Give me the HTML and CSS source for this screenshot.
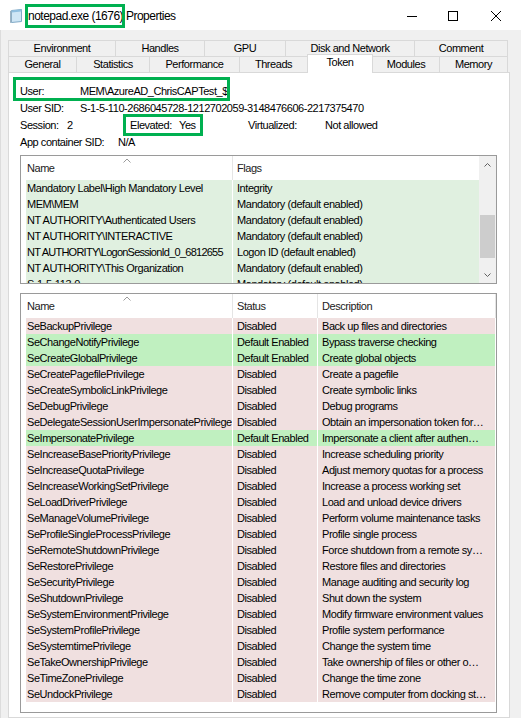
FILE: index.html
```html
<!DOCTYPE html>
<html lang="en">
<head>
    <meta charset="UTF-8">
    <title>notepad.exe (1676) Properties</title>
    <link rel="stylesheet" href="styles.css">
</head>
<body>
<div class="window">
    <div class="titlebar">
        <svg class="app-icon" viewBox="0 0 16 16">
            <path d="M3.5 2.5 L13.5 1.5 L13.5 13.5 L3.5 14.5 Z" fill="#cfe6f5" stroke="#7fa9c6"/>
            <path d="M3.5 2.5 L13.5 1.5 L13.5 3.5 L3.5 4.5 Z" fill="#8fbfe0"/>
            <path d="M2 3 L3.5 2.5 L3.5 14.5 L2 15 Z" fill="#9cb3c4"/>
        </svg>
        <span class="title">notepad.exe (1676) Properties</span>
        <div class="controls">
            <svg class="min" viewBox="0 0 10 10"><path d="M0 5.5 H10" stroke="#000"/></svg>
            <svg class="max" viewBox="0 0 10 10"><rect x="0.5" y="0.5" width="9" height="9" fill="none" stroke="#000"/></svg>
            <svg class="close" viewBox="0 0 10 10"><path d="M0 0 L10 10 M10 0 L0 10" stroke="#000"/></svg>
        </div>
    </div>

    <div class="frame">
        <div class="tab-row back">
            <div class="tab">Environment</div>
            <div class="tab">Handles</div>
            <div class="tab">GPU</div>
            <div class="tab">Disk and Network</div>
            <div class="tab">Comment</div>
        </div>
        <div class="tab-row front">
            <div class="tab">General</div>
            <div class="tab">Statistics</div>
            <div class="tab">Performance</div>
            <div class="tab">Threads</div>
            <div class="tab active">Token</div>
            <div class="tab">Modules</div>
            <div class="tab">Memory</div>
        </div>

        <div class="tab-page">
            <div class="info-line">
                <span class="lbl lbl-user">User:</span>
                <span>MEM\AzureAD_ChrisCAPTest_$</span>
            </div>
            <div class="info-line">
                <span class="lbl lbl-user">User SID:</span>
                <span>S-1-5-110-2686045728-1212702059-3148476606-2217375470</span>
            </div>
            <div class="info-line">
                <span class="part part-session"><span class="lbl lbl-session">Session:</span>2</span>
                <span class="part part-elevated"><span class="lbl lbl-elevated">Elevated:</span>Yes</span>
                <span class="part"><span class="lbl lbl-virtual">Virtualized:</span>Not allowed</span>
            </div>
            <div class="info-line">
                <span class="lbl lbl-container">App container SID:</span>
                <span>N/A</span>
            </div>

            <!-- groups -->
            <div class="list groups">
                <div class="list-body">
                    <div class="list-head">
                        <div class="col-head h-name">
                            <svg class="sort-arrow" viewBox="0 0 8 5"><path d="M0.5 4.5 L4 1 L7.5 4.5" fill="none" stroke="#9a9a9a"/></svg>
                            Name
                        </div>
                        <div class="col-head h-flags">Flags</div>
                    </div>
                    <div class="list-row group-on"><span class="cell c-name">Mandatory Label\High Mandatory Level</span><span class="cell c-flags">Integrity</span></div>
                    <div class="list-row group-on"><span class="cell c-name">MEM\MEM</span><span class="cell c-flags">Mandatory (default enabled)</span></div>
                    <div class="list-row group-on"><span class="cell c-name">NT AUTHORITY\Authenticated Users</span><span class="cell c-flags">Mandatory (default enabled)</span></div>
                    <div class="list-row group-on"><span class="cell c-name">NT AUTHORITY\INTERACTIVE</span><span class="cell c-flags">Mandatory (default enabled)</span></div>
                    <div class="list-row group-on"><span class="cell c-name tight">NT AUTHORITY\LogonSessionId_0_6812655</span><span class="cell c-flags">Logon ID (default enabled)</span></div>
                    <div class="list-row group-on"><span class="cell c-name">NT AUTHORITY\This Organization</span><span class="cell c-flags">Mandatory (default enabled)</span></div>
                    <div class="list-row group-on"><span class="cell c-name">S-1-5-113-0</span><span class="cell c-flags">Mandatory (default enabled)</span></div>
                </div>
                <div class="scrollbar">
                    <div class="scroll-btn"><svg viewBox="0 0 7 4"><path d="M0.5 3.5 L3.5 0.5 L6.5 3.5" fill="none" stroke="#606060"/></svg></div>
                    <div class="scroll-track"><div class="scroll-thumb"></div></div>
                    <div class="scroll-btn"><svg viewBox="0 0 7 4"><path d="M0.5 0.5 L3.5 3.5 L6.5 0.5" fill="none" stroke="#606060"/></svg></div>
                </div>
            </div>

            <!-- privileges -->
            <div class="list privileges">
                <div class="list-head">
                    <div class="col-head h-name">
                        <svg class="sort-arrow" viewBox="0 0 8 5"><path d="M0.5 4.5 L4 1 L7.5 4.5" fill="none" stroke="#9a9a9a"/></svg>
                        Name
                    </div>
                    <div class="col-head h-status">Status</div>
                    <div class="col-head h-desc">Description</div>
                </div>
                <div class="list-row off"><span class="cell c-name">SeBackupPrivilege</span><span class="cell c-status">Disabled</span><span class="cell c-desc">Back up files and directories</span></div>
                <div class="list-row on"><span class="cell c-name">SeChangeNotifyPrivilege</span><span class="cell c-status">Default Enabled</span><span class="cell c-desc">Bypass traverse checking</span></div>
                <div class="list-row on"><span class="cell c-name">SeCreateGlobalPrivilege</span><span class="cell c-status">Default Enabled</span><span class="cell c-desc">Create global objects</span></div>
                <div class="list-row off"><span class="cell c-name">SeCreatePagefilePrivilege</span><span class="cell c-status">Disabled</span><span class="cell c-desc">Create a pagefile</span></div>
                <div class="list-row off"><span class="cell c-name">SeCreateSymbolicLinkPrivilege</span><span class="cell c-status">Disabled</span><span class="cell c-desc">Create symbolic links</span></div>
                <div class="list-row off"><span class="cell c-name">SeDebugPrivilege</span><span class="cell c-status">Disabled</span><span class="cell c-desc">Debug programs</span></div>
                <div class="list-row off"><span class="cell c-name">SeDelegateSessionUserImpersonatePrivilege</span><span class="cell c-status">Disabled</span><span class="cell c-desc">Obtain an impersonation token for…</span></div>
                <div class="list-row on"><span class="cell c-name">SeImpersonatePrivilege</span><span class="cell c-status">Default Enabled</span><span class="cell c-desc">Impersonate a client after authen…</span></div>
                <div class="list-row off"><span class="cell c-name">SeIncreaseBasePriorityPrivilege</span><span class="cell c-status">Disabled</span><span class="cell c-desc">Increase scheduling priority</span></div>
                <div class="list-row off"><span class="cell c-name">SeIncreaseQuotaPrivilege</span><span class="cell c-status">Disabled</span><span class="cell c-desc">Adjust memory quotas for a process</span></div>
                <div class="list-row off"><span class="cell c-name">SeIncreaseWorkingSetPrivilege</span><span class="cell c-status">Disabled</span><span class="cell c-desc">Increase a process working set</span></div>
                <div class="list-row off"><span class="cell c-name">SeLoadDriverPrivilege</span><span class="cell c-status">Disabled</span><span class="cell c-desc">Load and unload device drivers</span></div>
                <div class="list-row off"><span class="cell c-name">SeManageVolumePrivilege</span><span class="cell c-status">Disabled</span><span class="cell c-desc">Perform volume maintenance tasks</span></div>
                <div class="list-row off"><span class="cell c-name">SeProfileSingleProcessPrivilege</span><span class="cell c-status">Disabled</span><span class="cell c-desc">Profile single process</span></div>
                <div class="list-row off"><span class="cell c-name">SeRemoteShutdownPrivilege</span><span class="cell c-status">Disabled</span><span class="cell c-desc">Force shutdown from a remote sy…</span></div>
                <div class="list-row off"><span class="cell c-name">SeRestorePrivilege</span><span class="cell c-status">Disabled</span><span class="cell c-desc">Restore files and directories</span></div>
                <div class="list-row off"><span class="cell c-name">SeSecurityPrivilege</span><span class="cell c-status">Disabled</span><span class="cell c-desc">Manage auditing and security log</span></div>
                <div class="list-row off"><span class="cell c-name">SeShutdownPrivilege</span><span class="cell c-status">Disabled</span><span class="cell c-desc">Shut down the system</span></div>
                <div class="list-row off"><span class="cell c-name">SeSystemEnvironmentPrivilege</span><span class="cell c-status">Disabled</span><span class="cell c-desc">Modify firmware environment values</span></div>
                <div class="list-row off"><span class="cell c-name">SeSystemProfilePrivilege</span><span class="cell c-status">Disabled</span><span class="cell c-desc">Profile system performance</span></div>
                <div class="list-row off"><span class="cell c-name">SeSystemtimePrivilege</span><span class="cell c-status">Disabled</span><span class="cell c-desc">Change the system time</span></div>
                <div class="list-row off"><span class="cell c-name">SeTakeOwnershipPrivilege</span><span class="cell c-status">Disabled</span><span class="cell c-desc">Take ownership of files or other o…</span></div>
                <div class="list-row off"><span class="cell c-name">SeTimeZonePrivilege</span><span class="cell c-status">Disabled</span><span class="cell c-desc">Change the time zone</span></div>
                <div class="list-row off"><span class="cell c-name">SeUndockPrivilege</span><span class="cell c-status">Disabled</span><span class="cell c-desc">Remove computer from docking st…</span></div>
            </div>
        </div>
    </div>

    <!-- green highlight boxes -->
    <div class="mark mark-title"></div>
    <div class="mark mark-user"></div>
    <div class="mark mark-elevated"></div>
</div>
</body>
</html>
```

FILE: styles.css
```css
* {
    box-sizing: border-box;
}

body {
    margin: 0;
    width: 521px;
    height: 718px;
    overflow: hidden;
    background: #f0f0f0;
    font-family: "Liberation Sans", Arial, sans-serif;
    font-size: 11px;
    letter-spacing: -0.45px;
    color: #000;
}

.window {
    position: relative;
    height: 718px;
}

/* title bar */
.titlebar {
    height: 30px;
    background: #fff;
    display: flex;
    align-items: center;
    padding: 1px 0 0 8px;
}

.app-icon {
    width: 16px;
    height: 16px;
    flex: none;
}

.title {
    margin-left: 4px;
    font-size: 12px;
    letter-spacing: -0.5px;
}

.controls {
    margin-left: auto;
    display: flex;
    align-items: center;
    padding-right: 20px;
}

.controls svg {
    width: 10px;
    height: 10px;
}

.controls .max { margin-left: 31px; }
.controls .close { margin-left: 33px; }

/* tabs */
.frame {
    padding: 10px 0 0 7px;
    border-left: 1px solid #dcdcdc;
    height: 688px;
}

.tab-row {
    display: grid;
    width: 500px;
}

.tab-row.back { grid-template-columns: 108px 89px 81px 129px 93px; }
.tab-row.front { grid-template-columns: 69px 73px 90px 68px 65px 67px 68px; }

.tab {
    height: 16px;
    line-height: 15px;
    text-align: center;
    white-space: nowrap;
    border-top: 1px solid #d9d9d9;
    border-right: 1px solid #d9d9d9;
}

.tab:first-child {
    border-left: 1px solid #d9d9d9;
}

.tab.active {
    position: relative;
    z-index: 1;
    height: 19px;
    margin: -2px 0 -1px -1px;
    background: #fff;
    border-left: 1px solid #d9d9d9;
}

.tab-page {
    width: 502px;
    height: 646px;
    background: #fff;
    border: 1px solid #d9d9d9;
    padding: 10px 12px 0 11px;
}

/* token info */
.info-line {
    display: flex;
    height: 17px;
    line-height: 17px;
    white-space: nowrap;
}

.lbl { flex: none; display: inline-block; }
.lbl-user { width: 60px; }
.lbl-session { width: 47px; }
.lbl-elevated { width: 49px; }
.lbl-virtual { width: 77px; }
.lbl-container { width: 98px; }

.part { flex: none; }
.part-session { width: 110px; }
.part-elevated { width: 118px; }

/* list views */
.list {
    width: 477px;
    background: #fff;
    border: 1px solid #9a9a9a;
    overflow: hidden;
}

.groups {
    margin-top: 4px;
    height: 129px;
    display: flex;
}

.privileges {
    margin-top: 9px;
    height: 420px;
}

.list-body {
    flex: 1;
    overflow: hidden;
}

.list-head {
    display: flex;
    height: 24px;
    line-height: 24px;
    color: #222;
}

.col-head {
    position: relative;
    flex: none;
    padding-left: 4px;
    border-right: 1px solid #e5e5e5;
}

.h-name { width: 212px; padding-left: 6px; }
.h-status { width: 85px; }
.h-desc { width: 178px; }
.h-flags { flex: 1; border-right: none; }

.sort-arrow {
    position: absolute;
    top: 2px;
    left: 50%;
    margin-left: -4px;
    width: 8px;
    height: 5px;
}

.list-row {
    display: flex;
    gap: 1px;
    height: 16px;
    line-height: 16px;
    padding-left: 5px;
    white-space: nowrap;
}

.cell {
    flex: none;
    overflow: hidden;
    padding-left: 4px;
}

.c-name { width: 206px; padding-left: 1px; }
.c-flags { width: 247px; }
.c-status { width: 84px; }
.c-desc { width: 177px; }

/* long group name, squeezed a little so it fits like the original */
.tight { letter-spacing: -0.75px; }

.group-on .cell { background: #e0f0e0; }
.off .cell { background: #f0e0e0; }
.on .cell { background: #c0f0c0; }

/* scrollbar */
.scrollbar {
    width: 17px;
    flex: none;
    display: flex;
    flex-direction: column;
    background: #f0f0f0;
}

.scroll-btn {
    height: 17px;
    display: flex;
    align-items: center;
    justify-content: center;
}

.scroll-btn svg {
    width: 7px;
    height: 4px;
}

.scroll-track {
    flex: 1;
    padding-top: 42px;
}

.scroll-thumb {
    height: 43px;
    margin: 0 1px;
    background: #cdcdcd;
}

/* annotation boxes */
.mark {
    position: absolute;
    border: 3px solid #00b050;
}

.mark-title { left: 25px; top: 4px; width: 100px; height: 24px; }
.mark-user { left: 13px; top: 77px; width: 217px; height: 24px; }
.mark-elevated { left: 123px; top: 114px; width: 80px; height: 22px; }
```
